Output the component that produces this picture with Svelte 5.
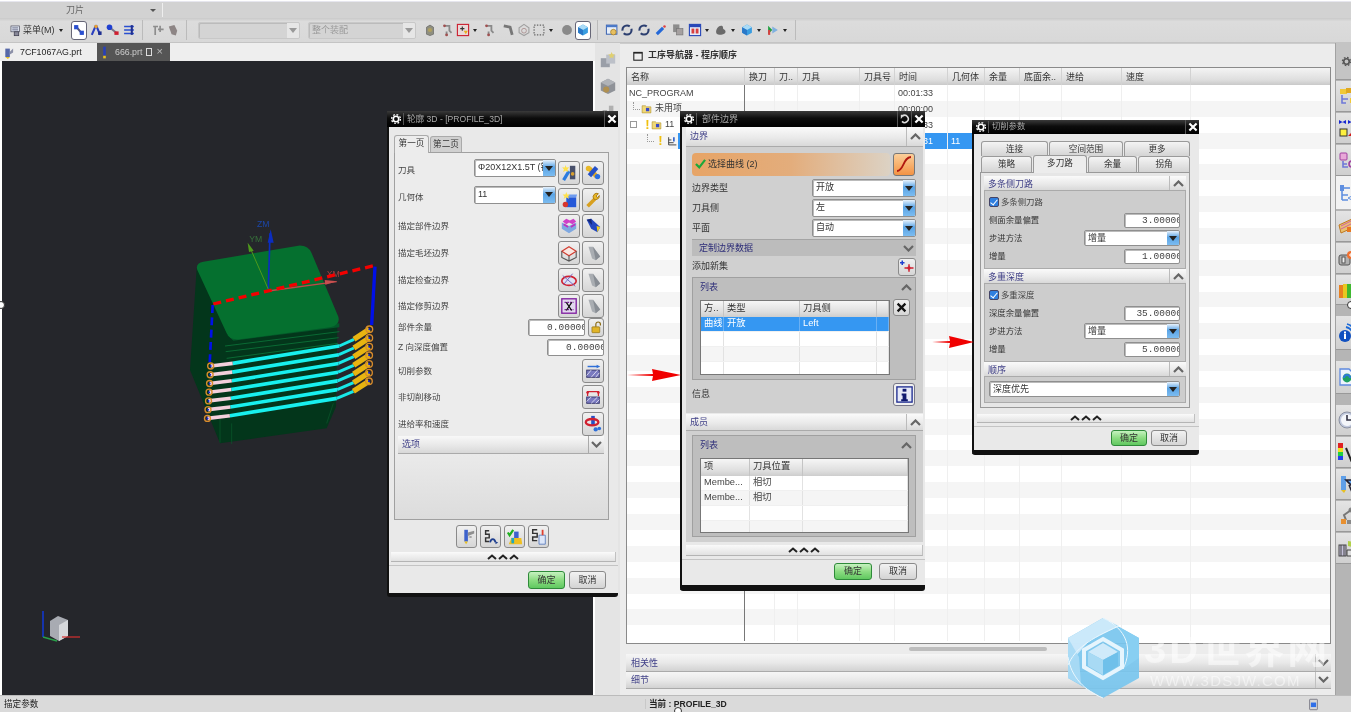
<script>
  const I = {
    menu: `<rect x="3" y="3" width="13" height="9" fill="#dfe6f2" stroke="#445"/><path d="M5 6h9M5 9h9" stroke="#335"/><rect x="8" y="12" width="7" height="6" fill="#889" stroke="#334"/>`,
    sel1: `<path d="M5 4l10 12" stroke="#557" stroke-width="3"/><rect x="3" y="3" width="6" height="6" fill="#2a4fd0"/><rect x="11" y="11" width="6" height="6" fill="#2a4fd0"/>`,
    sel2: `<path d="M10 3L4 17M10 3l6 14" stroke="#2a3fc0" stroke-width="3" fill="none"/><circle cx="10" cy="5" r="2.5" fill="#e8a030"/><rect x="13" y="12" width="5" height="5" fill="#203090"/>`,
    sel3: `<path d="M5 6l11 9" stroke="#778" stroke-width="3"/><circle cx="5" cy="6" r="4" fill="#2040d0"/><rect x="12" y="12" width="6" height="5" fill="#d02030"/>`,
    sel4: `<path d="M3 5h14M3 10h14M3 15h14" stroke="#2a4fd0" stroke-width="2.4"/><path d="M14 3v14" stroke="#203090" stroke-width="3"/>`,
    grayA: `<path d="M3 5h7M6 5v12M13 4v9M10 9h8" stroke="#8d8d8d" stroke-width="2.4"/>`,
    grayB: `<path d="M4 5l8-2 4 8-2 7-6-2z" fill="#8d8585"/>`,
    grayC: `<path d="M5 16V6l5-3 5 3v10l-5 2z" fill="#8f8f7f" stroke="#666"/><circle cx="10" cy="10" r="3" fill="#b0a060"/>`,
    redbox: `<rect x="2" y="2" width="16" height="16" fill="#e9d9d9" stroke="#cc2030" stroke-width="1.6"/><path d="M6 8h6M9 5v6" stroke="#333" stroke-width="1.6"/><path d="M11 11h6l-3 5z" fill="#e8b020"/>`,
    hook: `<path d="M5 4h7v7l3 3M8 12v5" stroke="#8a8a8a" stroke-width="2.6" fill="none"/><circle cx="5" cy="4" r="2" fill="#a05050"/><circle cx="8" cy="17" r="2" fill="#a05050"/>`,
    hook2: `<path d="M4 4l9 2 3 11" stroke="#777" stroke-width="4" fill="none"/>`,
    ball: `<circle cx="10" cy="10" r="7" fill="#8a8a8a"/>`,
    net: `<path d="M10 2l7 5v7l-7 4-7-4V7z" fill="none" stroke="#a0a0a0" stroke-width="1.6"/><circle cx="10" cy="11" r="3.4" fill="none" stroke="#a08080"/>`,
    dots: `<rect x="3" y="3" width="14" height="14" fill="none" stroke="#666" stroke-width="1.6" stroke-dasharray="2 2"/>`,
    cube: `<path d="M10 2l7 4v8l-7 4-7-4V6z" fill="#3a9de0"/><path d="M10 10l7-4-7-4-7 4z" fill="#a9dbf7"/><path d="M10 10v8l-7-4V6z" fill="#2a78c8"/>`,
    win: `<rect x="2" y="3" width="15" height="13" fill="#e6eef8" stroke="#3860b0" stroke-width="1.4"/><rect x="2" y="3" width="15" height="3" fill="#4a78c8"/><circle cx="12" cy="13" r="4" fill="#e8c060" stroke="#a07820"/>`,
    ring: `<circle cx="10" cy="10" r="6.5" fill="none" stroke="#2c3f70" stroke-width="3" stroke-dasharray="15 4"/>`,
    wand: `<path d="M4 16l9-9" stroke="#2468d8" stroke-width="4.5"/><circle cx="15" cy="5" r="1.8" fill="#e04040"/>`,
    stack: `<rect x="3" y="2" width="9" height="11" fill="#8d8d8d"/><rect x="8" y="8" width="9" height="9" fill="#a5a0a0" stroke="#777"/>`,
    cal: `<rect x="2" y="2" width="16" height="16" fill="#e8edf8" stroke="#2848b8" stroke-width="1.6"/><rect x="2" y="2" width="16" height="4" fill="#2848b8"/><rect x="5" y="8" width="4" height="7" fill="#d84040"/><rect x="11" y="8" width="4" height="7" fill="#d84040"/>`,
    blob: `<path d="M3 13c0-5 4-10 8-9 3 1 1 4 3 5 3 1 4 6-1 7-4 1-10 2-10-3z" fill="#6a6a6a"/>`,
    vid: `<path d="M3 4l6 6-6 6z" fill="#20a040"/><path d="M9 5l8 5-8 5z" fill="#7fb0e0"/><rect x="3" y="10" width="3" height="7" fill="#d84040"/>`,
    newtool: `<rect x="11" y="2" width="6" height="15" fill="#48506a"/><circle cx="14" cy="11" r="2" fill="#d8a030"/><path d="M4 18l6-10" stroke="#2b7ce0" stroke-width="3.6"/><path d="M6 1l1.2 3 3-.5-2 2.5 1.2 3-3-1.5-3 1.5 1-3-2-2.5 3 .5z" fill="#ffe14a"/>`,
    wrenchb: `<path d="M6 5l8 9" stroke="#e0a820" stroke-width="5"/><path d="M14 4l-8 9" stroke="#2450c8" stroke-width="5"/><circle cx="5" cy="5" r="3" fill="#e8b828"/><circle cx="15" cy="14" r="3" fill="#2b6fe0"/>`,
    newgeo: `<path d="M7 7h11v11H7z" fill="#2558d8"/><path d="M7 7l3-3h9l-1 3z" fill="#6f9cf0"/><circle cx="6" cy="15" r="3" fill="#d8342c"/><path d="M7 1l1 3 3 0-2 2 1 3-3-2-3 2 1-3-2-2 3 0z" fill="#ffe14a"/>`,
    wrench: `<path d="M4 17l8-8" stroke="#d8a020" stroke-width="4"/><path d="M11 9a4 4 0 0 1 5-6l-2.5 2.5 1.5 2L17 5a4 4 0 0 1-6 4z" fill="#e8b828" stroke="#a87810"/>`,
    part: `<path d="M10 18L2 13V6l8 4 8-4v7z" fill="#7fa8e0"/><path d="M3 5l4-3 4 2 4-2 3 3-4 3-4-2-3 2z" fill="#d040c8"/><path d="M4 8l5 3M12 11l5-3" stroke="#c030c0" stroke-width="2"/>`,
    flash: `<path d="M3 3l5-1 10 9-3 6-7-4z" fill="#2448c0"/><path d="M14 10l4 1-3 6z" fill="#f0d020"/><path d="M3 3l5-1 1 7z" fill="#142878"/>`,
    flashG: `<path d="M5 3h5l8 11-5 4-4-2z" fill="#a9adb2"/><path d="M10 3l8 11-5 4z" fill="#888d94"/>`,
    blank: `<path d="M10 3l8 5-8 5-8-5z" fill="#fae6e0" stroke="#d03c30" stroke-width="1.3"/><path d="M2 8v7l8 4 8-4V8M10 13v6" fill="none" stroke="#555" stroke-width="1.2"/>`,
    check: `<ellipse cx="10" cy="11" rx="8" ry="5" fill="#dbe2f4" stroke="#d02030" stroke-width="1.8"/><path d="M3 5l14 12M4 15L14 3" stroke="#7060c0"/>`,
    trim: `<rect x="2" y="2" width="16" height="16" fill="#e2d8ee" stroke="#8020a0" stroke-width="1.5"/><path d="M5 6h10M5 14h10" stroke="#8020a0" stroke-width="1.5" stroke-dasharray="2 1"/><path d="M7 6l6 9M13 6l-6 9" stroke="#111" stroke-width="1.4"/>`,
    lock: `<rect x="3" y="9" width="12" height="9" rx="1" fill="#e0b428" stroke="#8a6a10"/><path d="M9 9V5a3.4 3.4 0 0 1 7 0v2" fill="none" stroke="#8a6a10" stroke-width="1.8"/>`,
    cut: `<rect x="3" y="9" width="14" height="8" fill="#7a7ac0" stroke="#33336a"/><path d="M3 15l5-6M8 17l7-8M13 17l4-5" stroke="#e0e0f0"/><path d="M4 5h11" stroke="#2f6fd8" stroke-width="1.6"/><path d="M14 3l4 2-4 2z" fill="#2f6fd8"/>`,
    noncut: `<rect x="3" y="10" width="14" height="7" fill="#7a7ac0" stroke="#33336a"/><path d="M3 15l5-5M8 17l7-7M13 17l4-4" stroke="#e0e0f0"/><path d="M4 9V4h12v5" fill="none" stroke="#d02030" stroke-width="1.4"/><circle cx="4" cy="5" r="1.5" fill="#d02030"/><circle cx="16" cy="5" r="1.5" fill="#d02030"/>`,
    feed: `<path d="M10 1v11" stroke="#2450c8" stroke-width="4"/><ellipse cx="9" cy="8" rx="7" ry="3.6" fill="none" stroke="#d02030" stroke-width="2.6"/><circle cx="13" cy="16" r="2.4" fill="#2f6fd8"/><circle cx="17" cy="15" r="2" fill="#2f6fd8"/>`,
    gen: `<path d="M7 2h4v13H7z" fill="#3d62cc"/><path d="M7 15h4l-2 3z" fill="#e8c020"/><path d="M11 5l7-2v3l-7 3zM11 10l4-1v2z" fill="#8f8f8f"/>`,
    repl: `<path d="M8 3H4v4h4v4H4v4h4" fill="none" stroke="#333" stroke-width="1.6"/><path d="M9 16c1-5 5-5 6 0" fill="none" stroke="#1f3f8f" stroke-width="2"/><path d="M15 18l3-2-3-1z" fill="#1f3f8f"/>`,
    verify: `<path d="M2 5l2 3 4-6" fill="none" stroke="#20b020" stroke-width="2.4"/><rect x="9" y="4" width="5" height="12" fill="#3d62cc"/><path d="M3 18l3-7h11l1 7z" fill="#f0c020"/><rect x="6" y="11" width="3" height="6" fill="#20a8c0"/>`,
    list: `<path d="M8 2H3v4h5v4H3v4h5" fill="none" stroke="#333" stroke-width="1.6"/><path d="M10 8h7v10h-7z" fill="#dce6f8" stroke="#6080c0"/><path d="M13 2h2v6h-2z" fill="#e04030"/>`,
    add: `<path d="M3 2v6M0 5h6" stroke="#2040d0" stroke-width="2"/><path d="M6 12h12M12 7v10" stroke="#d02030" stroke-width="2"/><circle cx="12" cy="12" r="2.2" fill="#d02030"/>`,
    x: `<path d="M4 4l12 12M16 4L4 16" stroke="#111" stroke-width="3.4"/>`,
    info: `<rect x="2" y="2" width="16" height="16" fill="#e6eaf8" stroke="#1c2a90" stroke-width="1.4"/><rect x="8" y="4" width="4" height="3" fill="#101a70"/><path d="M7 9h5v6h1.5v2h-7v-2H8v-4H7z" fill="#101a70"/>`,
    curve: `<path d="M3 17c7 0 6-14 14-14" fill="none" stroke="#b01810" stroke-width="1.8"/>`,
    s1: `<rect x="3" y="3" width="7" height="5" fill="#f0c838"/><rect x="9" y="2" width="6" height="5" fill="#e0a820"/><path d="M5 9v8h4M5 13h6" stroke="#6f78d8" stroke-width="1.6" fill="none"/><rect x="13" y="12" width="6" height="5" fill="#f0c838"/>`,
    s2: `<path d="M2 2l7 4 0-4-7 4zM18 2l-7 4 0-4 7 4z" fill="#1626d0"/><rect x="3" y="11" width="7" height="7" fill="#fdf040" stroke="#333"/><path d="M11 18l7-7v7z" fill="#d01818"/>`,
    s3: `<rect x="3" y="3" width="7" height="7" rx="1" fill="#e8a8d8" stroke="#a040a0"/><path d="M6 11v6h5M6 14h4" stroke="#6f78d8" stroke-width="1.6" fill="none"/><circle cx="15" cy="14" r="3" fill="none" stroke="#a040a0" stroke-width="1.6"/>`,
    s4: `<rect x="3" y="2" width="4" height="6" fill="#5f8fe0"/><path d="M5 8v9M5 12h6M5 17h6" stroke="#5f8fe0" stroke-width="1.6"/><path d="M11 15l6 3v-6z" fill="none" stroke="#5f8fe0"/><path d="M7 5h6" stroke="#5f8fe0" stroke-width="1.6"/>`,
    s5: `<path d="M2 9l13-6v9L4 17z" fill="#e8c070" stroke="#c07820"/><path d="M4 10l10-5M4 13l10-5" stroke="#d060a0"/><rect x="10" y="11" width="8" height="5" fill="#e87820"/><circle cx="17" cy="15" r="2.6" fill="#2f78d8"/>`,
    s6: `<rect x="2" y="7" width="11" height="10" rx="2" fill="#b0b0b0" stroke="#555"/><rect x="5" y="9" width="3" height="6" fill="#eee" stroke="#555"/><circle cx="14" cy="7" r="4" fill="#f07030"/><path d="M12 7h4M14 5v4" stroke="#fff"/>`,
    s7: `<rect x="2" y="5" width="4" height="13" fill="#e88020"/><rect x="6" y="4" width="4" height="14" fill="#e8c820"/><rect x="10" y="4" width="4" height="14" fill="#40b830"/><rect x="14" y="4" width="4" height="14" fill="#2f78e8"/>`,
    s8: `<circle cx="8" cy="13" r="6" fill="#1050c0"/><rect x="7" y="11" width="2" height="5" fill="#fff"/><rect x="7" y="8.5" width="2" height="2" fill="#fff"/><path d="M9 4a9 9 0 0 1 7 8M10 1a12 12 0 0 1 9 11" fill="none" stroke="#1c6ad8" stroke-width="1.8"/>`,
    s9: `<path d="M3 2h9l5 5v11H3z" fill="#eef3fc" stroke="#5f8ae0" stroke-width="1.3"/><circle cx="10" cy="11" r="4.4" fill="#20a060"/><path d="M7 11a3 3 0 0 1 6 0" stroke="#2f78d8" stroke-width="2" fill="none"/>`,
    s10: `<circle cx="10" cy="10" r="8" fill="#c0c8dc" stroke="#8a90a0"/><circle cx="10" cy="10" r="6" fill="#f4f6fa"/><path d="M10 5v5h4" stroke="#334" stroke-width="1.6" fill="none"/>`,
    s11: `<rect x="1" y="1" width="5" height="5" fill="#e02020"/><rect x="1" y="6" width="5" height="4" fill="#f0e020"/><rect x="1" y="10" width="5" height="4" fill="#20d040"/><rect x="1" y="14" width="5" height="4" fill="#2040f0"/><path d="M9 6l5 12 4-10" fill="none" stroke="#222" stroke-width="2"/>`,
    s12: `<rect x="4" y="2" width="5" height="14" fill="#5f9fe8"/><path d="M4 16h5l-2 3z" fill="#e8c020"/><path d="M9 6h9l-4 5zM12 11l3 7" stroke="#223" stroke-width="1.6" fill="#5f9fe8"/>`,
    s13: `<circle cx="14" cy="4" r="2.5" fill="#888"/><path d="M14 4l-7 5 2 5" stroke="#777" stroke-width="2" fill="none"/><rect x="4" y="13" width="5" height="5" fill="#e89030"/><rect x="10" y="14" width="5" height="4" fill="#888"/>`,
    s14: `<rect x="2" y="7" width="7" height="11" fill="#c4c0d8" stroke="#444"/><path d="M4 7v11M7 7v11" stroke="#444"/><path d="M11 3l5 1-1 5-4-1z" fill="#b0d048"/><path d="M10 12h8v6h-8z" fill="#ddd" stroke="#444"/>`,
    gearS: `<circle cx="10" cy="10" r="5" fill="none" stroke="#555" stroke-width="3"/><circle cx="10" cy="10" r="7.5" fill="none" stroke="#555" stroke-width="2.2" stroke-dasharray="3 2.9"/>`,
    gear: `<circle cx="10" cy="10" r="4.6" fill="none" stroke="#fff" stroke-width="2.8"/><circle cx="10" cy="10" r="7.4" fill="none" stroke="#fff" stroke-width="2.2" stroke-dasharray="3 2.8"/>`,
    close: `<path d="M4 4l12 12M16 4L4 16" stroke="#fff" stroke-width="3.6"/>`,
    reset: `<path d="M5 14a6 6 0 1 0 1-9" fill="none" stroke="#ddd" stroke-width="2.6"/><path d="M9 2v7H3z" fill="#ddd" transform="rotate(180 6 6)"/>`,
    navbox: `<rect x="3" y="4" width="14" height="13" fill="#eee" stroke="#222" stroke-width="1.8"/><path d="M3 5h14" stroke="#222" stroke-width="2"/>`,
    pt1: `<path d="M2 4h7v13H2z" fill="#5668a8"/><path d="M9 9l5-5v6l-5 3z" fill="#8c90a8"/><path d="M2 17h7l-3 3z" fill="#e8c020"/>`,
    pt2: `<path d="M8 1h4v14H8z" fill="#2840b8"/><rect x="8" y="15" width="4" height="4" fill="#e8c020"/>`,
    fold: `<path d="M2 5h6l2 2h8v11H2z" fill="#f0d878" stroke="#a88a20"/><rect x="9" y="9" width="6" height="6" fill="#3848c8"/>`,
    op: `<path d="M3 4v14h14M3 14h9M3 9h5" stroke="#333" stroke-width="1.6" fill="none"/><path d="M11 4h3v8h-3z" fill="#3060c8"/>`,
    strip1: `<rect x="2" y="8" width="10" height="10" fill="#9a9fa8"/><rect x="8" y="4" width="10" height="10" fill="#bcc0c8"/><path d="M14 1l1.2 2.6 2.6.3-2 1.8.6 2.7-2.4-1.4-2.4 1.4.6-2.7-2-1.8 2.6-.3z" fill="#e0d070"/>`,
    strip2: `<path d="M10 2l8 4v9l-8 4-8-4V6z" fill="#8f9298"/><path d="M10 10l8-4-8-4-8 4z" fill="#b0b3b8"/><circle cx="8" cy="14" r="3.4" fill="#b09050"/>`,
    strip3: `<rect x="4" y="8" width="5" height="10" fill="#9a9a9a"/><rect x="11" y="3" width="5" height="15" fill="#b0b0b0"/>`,
    smallIcon: `<rect x="4" y="2" width="12" height="16" rx="1" fill="#d8d8d8" stroke="#556"/><rect x="6" y="7" width="8" height="7" fill="#2f6fe8"/>`
  };

  const tools = [
    ['sel1', 0, 1], ['sel2', 2], ['sel3', 3], ['sel4', 2], '|',
    ['grayA', 4], ['grayB', 1], '|'
  ];
  const tools2 = [
    ['grayC', 7], ['hook', 4], ['redbox', 1], '^', ['hook', 4], ['hook2', 4], ['net', 2], ['dots', 1], '^', ['ball', 5], ['cube', 1, 1], '|',
    ['win', 3], ['ring', 1], ['ring', 3], ['wand', 3], ['stack', 3], ['cal', 3], '^', ['blob', 3], '^', ['cube', 3], '^', ['vid', 3], '^', '|'
  ];

  const cols = ['名称', '换刀', '刀..', '刀具', '刀具号', '时间', '几何体', '余量', '底面余..', '进给', '速度', ''];
  const rows = Array.from({ length: 35 }, (_, i) => i);

  const side = [
    ['gearS', 37, 0, 'top'], ['s1', 31, 1], ['s2', 31, 1], ['s3', 31, 1], ['s4', 33, 0, 'act'],
    ['s5', 31, 2], ['s6', 31, 1], ['s7', 30, 1], ['s8', 34, 11], ['s9', 33, 11], ['s10', 31, 11],
    ['s11', 31, 1], ['s12', 31, 1], ['s13', 31, 1], ['s14', 31, 1]
  ];

  const blocks = [0, 1, 2, 3, 4, 5, 6].map((i) => {
    const a = [92 - i * 1.6, 468 + i * 26.2];
    const b = [158 - i * 1.4, 460 + i * 26.2];
    const c = [478 - i * 1.3, 408 + i * 26.2];
    const d = [522 - i * 0.3, 388 + i * 26];
    const e = [568 - i * 0.2, 358 + i * 26];
    return { a, b, c, d, e };
  });
  const l1 = [['刀具', 'newtool', 'wrenchb'], ['几何体', 'newgeo', 'wrench'], ['描定部件边界', 'part', 'flash'], ['描定毛坯边界', 'blank', 'flashG'], ['描定检查边界', 'check', 'flashG'], ['描定修剪边界', 'trim', 'flashG']];
</script>

{#snippet ic(k, s = 14)}
  <svg class="ic" width={s} height={s} viewBox="0 0 20 20" aria-hidden="true">{@html I[k]}</svg>
{/snippet}
{#snippet combo(t, cls = '')}
  <div class="combo {cls}"><span class="ctext">{t}</span><span class="carrow"></span></div>
{/snippet}
{#snippet chev(down = false)}
  <svg class="chev" class:down width="11" height="7" viewBox="0 0 11 7" aria-hidden="true"><path d="M1 6l4.5-4.5L10 6" fill="none" stroke="#666" stroke-width="2.2"/></svg>
{/snippet}
{#snippet expand(cls)}
  <div class="expand {cls}">
    {#each [0, 1, 2] as n (n)}
      <svg width="10" height="6" viewBox="0 0 10 6" aria-hidden="true"><path d="M1 5l4-3.5L9 5" fill="none" stroke="#222" stroke-width="2"/></svg>
    {/each}
  </div>
{/snippet}
{#snippet title(t, reset = false)}
  <div class="title">
    <span class="tgear">{@render ic('gear', 12)}</span>
    <span class="ttext">{t}</span>
    {#if reset}<span class="tbtn">{@render ic('reset', 12)}</span>{/if}
    <span class="tbtn">{@render ic('close', 12)}</span>
  </div>
{/snippet}
{#snippet actions(cls)}
  <div class="actions {cls}"><button class="ok">确定</button><button class="cancel">取消</button></div>
{/snippet}
{#snippet toolitems(list)}
  {#each list as t, i (i)}
    {#if t === '|'}<span class="tsep"></span>
    {:else if t === '^'}<span class="tcaret"></span>
    {:else}<span class="ti" class:on={t[2]} style="margin-left:{t[1]}px">{@render ic(t[0], 14)}</span>{/if}
  {/each}
{/snippet}

<div class="app">
  <div class="ruler"></div>
  <div class="menu">
    <span class="mname">刀片</span><span class="mcaret"></span><span class="msep"></span>
  </div>
  <div class="toolbar">
    <span class="ti first">{@render ic('menu', 13)}</span><span class="mlabel">菜单(M)</span><span class="tcaret"></span>
    <span class="gap8"></span>
    {@render toolitems(tools)}
    <div class="combo gray c1"><span class="ctext"></span><span class="carrow g"></span></div>
    <div class="combo gray c2"><span class="ctext">整个装配</span><span class="carrow g"></span></div>
    {@render toolitems(tools2)}
  </div>

  <div class="work">
    <div class="leftpane">
      <div class="tabs">
        <div class="dtab">{@render ic('pt1', 13)}<span>7CF1067AG.prt</span></div>
        <div class="dtab cur">{@render ic('pt2', 13)}<span>666.prt</span><i class="dico"></i><b>×</b></div>
      </div>
      <div class="viewport">
        <svg class="scene" viewBox="0 0 630 720" aria-hidden="true">
          <path d="M50 175L30 480 120 700 440 655 468 590 472 350 160 385Z" fill="#03361b"/>
          <path d="M120 610V698M155 640V702M440 640l20-60" stroke="#0a5a2c" stroke-width="2" fill="none"/>
          <path d="M135 408L478 365M137 425L476 383M140 445L474 400" stroke="#0a6a34" stroke-width="3" fill="none"/>
          <path d="M142 375L478 340V352L160 392Z" fill="#04582a"/>
          <path d="M70 155L355 107Q385 105 395 130L475 320Q482 345 450 352L180 388Q150 392 140 370L52 180Q45 160 70 155Z" fill="#05702f"/>
          <path d="M265 236L270 70" stroke="#0b2dc0" stroke-width="5"/>
          <path d="M272 58l9 40h-18z" fill="#0b2dc0"/>
          <path d="M265 238L208 108" stroke="#4f9a1c" stroke-width="3"/>
          <path d="M203 98l18 24-14 4z" fill="#4f9a1c"/>
          <path d="M265 243L470 215" stroke="#c04848" stroke-width="4"/>
          <path d="M472 214l-38-4 2 14z" fill="#c85050"/>
          <text x="231" y="52" class="ax zm">ZM</text>
          <text x="208" y="95" class="ax ym">YM</text>
          <text x="440" y="200" class="ax xm">XM</text>
          <path d="M100 282L590 165" stroke="#f40000" stroke-width="10" stroke-dasharray="24 15"/>
          <path d="M585 170L575 345" stroke="#0010e8" stroke-width="10"/>
          <path d="M98 285L89 462" stroke="#0010e8" stroke-width="8" stroke-dasharray="24 13"/>
          {#each blocks as p, i (i)}
            <path d="M{p.c[0]} {p.c[1]}L{p.d[0]} {p.d[1]}" stroke="#18e8e8" stroke-width="9" fill="none"/>
            <path d="M{p.b[0]} {p.b[1]}L{p.c[0]} {p.c[1]}" stroke="#18f0ee" stroke-width="11" fill="none"/>
            <path d="M{p.a[0]} {p.a[1]}L{p.b[0]} {p.b[1]}" stroke="#f3d0dc" stroke-width="11" fill="none"/>
            <path d="M{p.d[0]} {p.d[1]}L{p.e[0]} {p.e[1]}" stroke="#e8b410" stroke-width="16" fill="none"/>
            <circle cx={p.a[0]} cy={p.a[1]} r="9" fill="none" stroke="#d88c2c" stroke-width="4"/>
            <circle cx={p.e[0]} cy={p.e[1]} r="10" fill="none" stroke="#d88c2c" stroke-width="4"/>
            <circle cx={p.a[0]} cy={p.a[1]} r="3" fill="#1020e0"/>
            <circle cx={p.e[0]} cy={p.e[1]} r="3" fill="#1020e0"/>
          {/each}
        </svg>
        <svg class="triad" viewBox="0 0 50 40" aria-hidden="true">
          <path d="M12 14l8-5 10 4v16l-9 5-9-5z" fill="#a8abb2"/>
          <path d="M21 18l9-5v16l-9 5z" fill="#d6d8dc"/>
          <path d="M5 30V4" stroke="#1038d8" stroke-width="1.5"/>
          <path d="M5 30l14 4" stroke="#28a048" stroke-width="1.5"/>
          <path d="M24 30h18" stroke="#d83030" stroke-width="1.2"/>
        </svg>
      </div>
    </div>
    <div class="strip">
      <span>{@render ic('strip1', 18)}</span>
      <span>{@render ic('strip2', 18)}</span>
      <span>{@render ic('strip3', 18)}</span>
    </div>
    <div class="nav">
      <div class="navhead">{@render ic('navbox', 12)}<span>工序导航器 - 程序顺序</span></div>
      <div class="table">
        <div class="thead tcols">
          {#each cols as c, i (i)}<div class="th">{c}</div>{/each}
        </div>
        <div class="tbody">
          {#each rows as r (r)}
            <div class="tr tcols" class:alt={r % 2 === 1}>
              <div class="td name">
                {#if r === 0}NC_PROGRAM
                {:else if r === 1}<span class="tree l1"></span>{@render ic('fold', 11)}<span class="nm">未用项</span>
                {:else if r === 2}<span class="minus"></span><span class="bang">!</span>{@render ic('fold', 11)}<span class="nm">11</span>
                {:else if r === 3}<span class="tree l2"></span><span class="bang b2">!</span><span class="opi">{@render ic('op', 11)}</span><span class="selrest"></span>
                {/if}
              </div>
              {#each cols.slice(1) as _, j (j)}
                <div class="td" class:sel={r === 3 && j < 6}>
                  {#if j === 4}{r === 0 ? '00:01:33' : r === 1 ? '00:00:00' : r === 2 ? '00:01:33' : r === 3 ? '00:01:31' : ''}{/if}
                  {#if j === 5 && r === 3}11{/if}
                </div>
              {/each}
            </div>
          {/each}
        </div>
      </div>
      <div class="grip"><span></span></div>
      <div class="npanel"><span>相关性</span><i>{@render chev(true)}</i></div>
      <div class="npanel"><span>细节</span><i>{@render chev(true)}</i></div>
    </div>
    <div class="sidebar">
      {#each side as s (s[0])}
        <div class="scell {s[3] || ''}" style="height:{s[1]}px;margin-top:{s[2]}px">{@render ic(s[0], s[0] === 'gearS' ? 11 : 20)}</div>
      {/each}
    </div>
  </div>
  <div class="status">
    <span class="sl">描定参数</span>
    <span class="sc">当前 : PROFILE_3D</span>
    <span class="sr">{@render ic('smallIcon', 13)}</span>
  </div>

  <!-- window 1 -->
  <div class="dlg d1">
    {@render title('轮廓 3D - [PROFILE_3D]')}
    <div class="d1tabs"><span class="dt on">第一页</span><span class="dt">第二页</span></div>
    <div class="d1panel">
      {#each l1 as r, i (i)}
        <div class="d1row" class:top={i < 2}>
          <span class="lab">{r[0]}</span>
          {#if i === 0}{@render combo('Φ20X12X1.5T (铣', 'cw')}{/if}
          {#if i === 1}{@render combo('11', 'cw')}{/if}
          <span class="ib">{@render ic(r[1], 18)}</span><span class="ib">{@render ic(r[2], 18)}</span>
        </div>
      {/each}
      <div class="d1row s first"><span class="lab">部件余量</span><span class="num w57">0.00000</span><span class="ib lk">{@render ic('lock', 13)}</span></div>
      <div class="d1row s"><span class="lab">Z 向深度偏置</span><span class="num w57">0.00000</span></div>
      <div class="d1row"><span class="lab">切削参数</span><span class="ib">{@render ic('cut', 18)}</span></div>
      <div class="d1row"><span class="lab">非切削移动</span><span class="ib">{@render ic('noncut', 18)}</span></div>
      <div class="d1row"><span class="lab">进给率和速度</span><span class="ib">{@render ic('feed', 18)}</span></div>
      <div class="optbar"><span>选项</span><i>{@render chev(true)}</i></div>
    </div>
    <div class="d1icons">
      {#each ['gen', 'repl', 'verify', 'list'] as k (k)}<span class="ib">{@render ic(k, 18)}</span>{/each}
    </div>
    {@render expand('e1')}
    <div class="dsep"></div>
    {@render actions('a1')}
  </div>

  <!-- window 2 -->
  <div class="dlg d2">
    {@render title('部件边界', true)}
    <div class="sec s20"><span>边界</span><i>{@render chev()}</i></div>
    <div class="graybody g1">
      <div class="pick">
        <div class="pickbar"><svg width="11" height="10" viewBox="0 0 13 12" aria-hidden="true"><path d="M1 6l4 4 7-9" fill="none" stroke="#1aa83a" stroke-width="2.6"/></svg><span>选择曲线 (2)</span></div>
        <span class="ib or">{@render ic('curve', 20)}</span>
      </div>
      <div class="fr"><span class="lab">边界类型</span>{@render combo('开放', 'w104')}</div>
      <div class="fr"><span class="lab">刀具侧</span>{@render combo('左', 'w104')}</div>
      <div class="fr"><span class="lab">平面</span>{@render combo('自动', 'w104')}</div>
      <div class="subbar"><span>定制边界数据</span>{@render chev(true)}</div>
      <div class="fr add"><span class="lab">添加新集</span><span class="ib sm">{@render ic('add', 15)}</span></div>
      <div class="grp gl">
        <div class="gh"><span>列表</span>{@render chev()}</div>
        <div class="gb">
          <div class="mt mt1">
            <div class="mh lc"><span>方..</span><span>类型</span><span>刀具侧</span><span></span></div>
            <div class="mr lc selr"><span>曲线</span><span>开放</span><span>Left</span><span></span></div>
            <div class="mr lc"><span></span><span></span><span></span><span></span></div>
            <div class="mr lc alt"><span></span><span></span><span></span><span></span></div>
            <div class="mr lc"><span></span><span></span><span></span><span></span></div>
          </div>
          <span class="ib xb">{@render ic('x', 13)}</span>
        </div>
      </div>
      <div class="fr info"><span class="lab">信息</span><span class="ib inf">{@render ic('info', 19)}</span></div>
    </div>
    <div class="sec s17"><span>成员</span><i>{@render chev()}</i></div>
    <div class="graybody g2">
      <div class="grp gm">
        <div class="gh"><span>列表</span>{@render chev()}</div>
        <div class="mt mt2">
          <div class="mh mc"><span>项</span><span>刀具位置</span><span></span></div>
          <div class="mr mc"><span>Membe...</span><span>相切</span><span></span></div>
          <div class="mr mc alt"><span>Membe...</span><span>相切</span><span></span></div>
          <div class="mr mc"><span></span><span></span><span></span></div>
          <div class="mr mc alt"><span></span><span></span><span></span></div>
        </div>
      </div>
    </div>
    {@render expand('e2')}
    <div class="dsep"></div>
    {@render actions('a2')}
  </div>

  <!-- window 3 -->
  <div class="dlg d3">
    {@render title('切削参数')}
    <div class="t3 r1"><span>连接</span><span>空间范围</span><span>更多</span></div>
    <div class="t3 r2"><span>策略</span><span class="on">多刀路</span><span>余量</span><span>拐角</span></div>
    <div class="d3panel">
      <div class="sec s15"><span>多条侧刀路</span><i>{@render chev()}</i></div>
      <div class="gb3">
        <div class="r3"><span class="cb"></span><span>多条侧刀路</span></div>
        <div class="r3"><span class="lab">侧面余量偏置</span><span class="num w56">3.00000</span></div>
        <div class="r3"><span class="lab">步进方法</span>{@render combo('增量', 'w96')}</div>
        <div class="r3"><span class="lab">增量</span><span class="num w56">1.00000</span></div>
      </div>
      <div class="sec s15"><span>多重深度</span><i>{@render chev()}</i></div>
      <div class="gb3">
        <div class="r3"><span class="cb"></span><span>多重深度</span></div>
        <div class="r3"><span class="lab">深度余量偏置</span><span class="num w56">35.00000</span></div>
        <div class="r3"><span class="lab">步进方法</span>{@render combo('增量', 'w96')}</div>
        <div class="r3"><span class="lab">增量</span><span class="num w56">5.00000</span></div>
      </div>
      <div class="sec s15"><span>顺序</span><i>{@render chev()}</i></div>
      <div class="gb3 last">{@render combo('深度优先', 'w191')}</div>
    </div>
    {@render expand('e3')}
    <div class="dsep s3"></div>
    {@render actions('a3')}
  </div>

  <svg class="arrow a-1" viewBox="0 0 54 16" aria-hidden="true"><path d="M0 8L26 7 25 2 54 8 25 14 26 9Z" fill="#f00000"/></svg>
  <svg class="arrow a-2" viewBox="0 0 42 16" aria-hidden="true"><path d="M0 8L18 7 17 2 42 8 17 14 18 9Z" fill="#f00000"/></svg>

  <div class="mark">
    <svg width="73" height="82" viewBox="0 0 73 82" aria-hidden="true">
      <path d="M36 1L72 21V61L36 81 1 61V21Z" fill="#78c6ee" opacity=".92"/>
      <path d="M36 1L1 21V48L22 24 52 9Z" fill="#cfeafa" opacity=".95"/>
      <path d="M1 21V61L14 68 12 40Z" fill="#a8daf4" opacity=".95"/>
      <path d="M36 1C60 12 66 30 56 52L72 41V21Z" fill="#88cff2"/>
      <path d="M1 48C8 32 22 22 52 9M36 1C60 12 66 32 56 52M1 40C4 60 18 74 36 81" fill="none" stroke="#eaf7fe" stroke-width="1"/>
      <path d="M36 22L55 33V50L36 61 17 50V33Z" fill="none" stroke="#e6f5fd" stroke-width="4"/>
      <path d="M36 26L51 35 36 43 21 35Z" fill="#cfeafa"/>
      <path d="M21 35L36 43V58L21 49Z" fill="#a8daf4"/>
      <path d="M51 35L36 43V58L51 49Z" fill="#6fc0ea"/>
    </svg>
  </div>
  <div class="wm1">3D世界网</div>
  <div class="wm2">WWW.3DSJW.COM</div>
  <span class="handle h1"></span><span class="handle h2"></span><span class="handle h3"></span>
</div>

<style>
  :global(body) { margin: 0; background: #fff; }
  * { box-sizing: border-box; }
  .app {
    position: relative; width: 1351px; height: 712px; overflow: hidden;
    display: flex; flex-direction: column; background: #e4e4e4;
    font: 9px/1.2 "Liberation Sans", "Noto Sans CJK SC", sans-serif; color: #333;
    filter: blur(.45px);
  }
  .ic { display: block; flex: none; }
  .ruler { height: 2px; background: #fff; border-bottom: 1px solid #e6e6ee; }
  .menu { height: 16px; background: #d2d2d2; display: flex; align-items: center; padding-left: 66px; color: #666; }
  .mname { width: 84px; }
  .mcaret { border: 3px solid transparent; border-top: 3px solid #555; margin-top: 3px; }
  .msep { width: 1px; height: 14px; background: #eee; margin-left: 6px; }
  .toolbar {
    height: 25px; display: flex; align-items: center; padding-left: 8px;
    background: linear-gradient(#c9c9c9, #dcdcdc 14%, #d8d8d8); border-bottom: 1px solid #c4c4c4;
  }
  .ti { display: flex; align-items: center; justify-content: center; width: 14px; height: 18px; flex: none; }
  .ti.on { background: #fff; border: 1px solid #667; border-radius: 3px; width: 16px; height: 19px; }
  .mlabel { margin-left: 1px; width: 33px; color: #333; white-space: nowrap; }
  .tcaret { border: 2.5px solid transparent; border-top: 3.5px solid #222; margin: 3px 2px 0 3px; flex: none; }
  .gap8 { width: 6px; }
  .tsep { width: 1px; height: 20px; background: #f2f2f2; border-left: 1px solid #bbb; margin: 0 4px 0 6px; flex: none; }
  .combo.gray { height: 17px; background: #d4d4d4; border: 1px solid #c8c8c8; flex: none; }
  .combo.gray .ctext { color: #999; }
  .combo.c1 { width: 102px; margin-left: 7px; }
  .combo.c2 { width: 108px; margin-left: 8px; }
  .carrow.g { background: #e6e6e6; }
  .carrow.g::after { border-top-color: #999; }

  .work { flex: 1; min-height: 0; display: flex; }
  .leftpane { width: 595px; display: flex; flex-direction: column; padding-left: 2px; background: #fff; }
  .tabs { height: 18px; background: #eeeeee; display: flex; align-items: stretch; margin-left: -2px; }
  .dtab { display: flex; align-items: center; gap: 3px; padding: 0 4px 0 4px; width: 97px; color: #222; font-size: 8.8px; white-space: nowrap; }
  .dtab.cur { width: 73px; background: #555; color: #ccc; gap: 4px; padding-left: 1px; }
  .dico { width: 6px; height: 8px; border: 1.5px solid #ddd; flex: none; }
  .dtab b { font-size: 11px; color: #bbb; font-weight: 400; }
  .viewport { flex: 1; background: #25262b; position: relative; margin-right: 2px; }
  .scene { position: absolute; left: 178px; top: 149px; width: 210px; height: 240px; }
  .ax { font: 26px "Liberation Sans", sans-serif; }
  .zm { fill: #1c46a8; } .ym { fill: #36703a; } .xm { fill: #a04040; }
  .triad { position: absolute; left: 36px; top: 546px; width: 50px; height: 40px; }
  .strip { width: 25px; background: #e4e4e4; display: flex; flex-direction: column; align-items: center; gap: 8px; padding-top: 8px; }
  .nav { width: 715px; display: flex; flex-direction: column; background: #ececec; padding: 0 4px 0 6px; border-top: 1px solid #ccc; }
  .navhead { height: 23px; display: flex; align-items: center; gap: 4px; padding-left: 6px; font-weight: 700; color: #333; }
  .table { height: 577px; background: #fff; border: 1px solid #8a8a8a; overflow: hidden; display: flex; flex-direction: column; }
  .tcols { display: grid; grid-template-columns: 118px 30px 23px 62px 35px 53px 37px 35px 42px 60px 69px 1fr; }
  .thead { height: 17px; flex: none; background: linear-gradient(#f4f4f4, #dedede 70%, #c9c9c9); }
  .th { padding: 4px 0 0 4px; border-right: 1px solid #d2d2d2; color: #333; white-space: nowrap; overflow: hidden; }
  .th:last-child { border-right: 0; }
  .tbody { flex: 1; overflow: hidden; }
  .tr { height: 15.9px; background: #fff; }
  .tr.alt { background: #f5f5f5; }
  .td { border-right: 1px solid #efefef; padding: 3px 0 0 3px; white-space: nowrap; overflow: hidden; color: #444; }
  .td:last-child { border-right: 0; }
  .td.name { border-right: 1px solid #777; display: flex; align-items: center; padding: 0 0 0 2px; position: relative; }
  .td.sel { background: #3597f2; color: #fff; }
  .nm { margin-left: 3px; }
  .tree { display: block; border-left: 1px dotted #999; border-bottom: 1px dotted #999; height: 8px; margin-top: -6px; flex: none; }
  .tree.l1 { width: 7px; margin-left: 4px; margin-right: 1px; }
  .tree.l2 { width: 7px; margin-left: 18px; }
  .minus { width: 7px; height: 7px; border: 1px solid #999; margin: 0 7px 0 1px; flex: none; }
  .bang { color: #f0c010; font-weight: 700; font-size: 13px; width: 7px; text-align: center; line-height: 14px; flex: none; }
  .bang.b2 { margin-left: 3px; }
  .opi { margin-left: 3px; }
  .selrest { flex: 1; height: 100%; background: #3597f2; }
  .grip { height: 10px; display: flex; align-items: center; padding-left: 283px; }
  .grip span { width: 138px; height: 4px; background: #bdbdbd; border-radius: 2px; }
  .npanel {
    height: 17.5px; display: flex; align-items: center; justify-content: space-between; padding: 0 0 0 5px;
    background: linear-gradient(#f6f6f6, #e9e9e9 50%, #d2d2d2); color: #3e3e86; border-bottom: 1px solid #aaa;
  }
  .npanel span { padding-top: 2px; }
  .npanel i { width: 16px; height: 100%; border-left: 1px solid #c0c0c0; display: flex; align-items: center; justify-content: center; }
  .sidebar { width: 16px; background: #b5b5b5; border-left: 1px solid #a2a2a2; display: flex; flex-direction: column; overflow: hidden; }
  .scell { background: linear-gradient(#e4e4e4, #cfcfcf); border-bottom: 1px solid #999; display: flex; align-items: center; padding-left: 1px; flex: none; width: 30px; }
  .scell.top { background: #c4c4c4; padding-left: 5px; }
  .scell.act { background: #f2f2f2; border: 0; }
  .status { height: 17px; background: #dadada; border-top: 1px solid #bbb; display: flex; align-items: center; position: relative; }
  .sl { width: 646px; padding-left: 4px; color: #222; border-right: 1px solid #c8c8c8; font-size: 8.6px; }
  .sc { padding-left: 3px; font-weight: 700; color: #222; flex: 1; font-size: 8.6px; }
  .sr { margin-right: 31px; }

  .dlg {
    position: absolute; display: flex; flex-direction: column; background: #e9e9e9;
    border-left: 2px solid #111; border-bottom: 4px solid #111; border-radius: 0 0 3px 3px;
  }
  .title { height: 16px; flex: none; background: linear-gradient(#3a3a3a, #0c0c0c 45%, #000); display: flex; align-items: center; color: #a8a8a8; padding-left: 2px; margin-left: -2px; }
  .tgear { width: 15px; display: flex; justify-content: center; border-right: 1px solid #555; margin-right: 3px; }
  .ttext { flex: 1; white-space: nowrap; font-size: 8.6px; }
  .d2 .ttext { font-size: 9px; padding-left: 2px; }
  .tbtn { width: 14px; height: 16px; display: flex; align-items: center; justify-content: center; border-left: 1px solid #555; }
  .combo { display: flex; height: 18px; border: 1px solid #8f8f8f; border-radius: 2px; background: #fff; overflow: hidden; box-shadow: inset 1px 1px 0 #bbb; flex: none; }
  .ctext { flex: 1; padding: 2px 0 0 3px; white-space: nowrap; overflow: hidden; color: #333; font-size: 9px; }
  .carrow { width: 12px; flex: none; background: linear-gradient(#e8f2fc, #5aa4e6 45%, #7cbcf0); display: flex; justify-content: center; align-items: center; }
  .carrow::after { content: ""; border: 4px solid transparent; border-top: 5px solid #222; border-bottom: 0; }
  .ib {
    display: flex; align-items: center; justify-content: center; flex: none;
    width: 22px; height: 24px; margin-left: 2px; border: 1px solid #8a8a8a; border-radius: 3px;
    background: linear-gradient(#f0f0f0, #d6d6d6);
  }
  .num {
    display: block; flex: none; height: 17px; background: #fff; border: 1px solid #8f8f8f; border-radius: 2px; box-shadow: inset 1px 1px 0 #bbb;
    font: 9.5px/15px "Liberation Mono", "DejaVu Sans Mono", monospace; color: #444; text-align: right; overflow: hidden; white-space: nowrap; direction: rtl; text-indent: -3px;
  }
  .lab { flex: 1; white-space: nowrap; color: #444; font-size: 8.5px; }
  .dsep { height: 1px; background: #c4c4c4; flex: none; }
  .actions { display: flex; justify-content: flex-end; flex: none; }
  .actions button { font: inherit; padding: 0; color: #333; border-radius: 3px; border: 1px solid #8a8a8a; height: 18px; width: 38px; background: linear-gradient(#f2f2f2, #d4d4d4); }
  .actions .ok { border-color: #2f8a3a; background: linear-gradient(#c6f2c0, #8cdc82 50%, #60c860); margin-right: 4px; }
  .expand { height: 10px; flex: none; display: flex; justify-content: center; align-items: center; gap: 1px; background: linear-gradient(#fafafa, #e2e2e2); border-bottom: 1px solid #b4b4b4; border-right: 1px solid #c0c0c0; }

  .d1 { left: 387px; top: 111px; width: 231px; height: 486px; }
  .d1tabs { display: flex; align-items: flex-end; height: 25px; padding-left: 5px; flex: none; }
  .dt { width: 32px; height: 16px; margin-left: 1px; border: 1px solid #aaa; border-bottom: 0; border-radius: 3px 3px 0 0; background: #d0d0d0; text-align: center; padding-top: 2px; font-size: 8.6px; white-space: nowrap; }
  .dt.on { width: 35px; height: 18px; background: #ececec; margin-left: 0; margin-bottom: -1px; position: relative; }
  .d1panel { margin: 0 9px 0 5px; height: 368px; flex: none; border: 1px solid #a0a0a0; background: linear-gradient(#ececec 80%, #dcdcdc); padding: 7px 4px 0 3px; }
  .d1row { height: 26.6px; display: flex; align-items: center; }
  .d1row.s { height: 20px; }
  .d1row.first { margin-top: -2px; }
  .d1row.top .lab { margin-top: -6px; }
  .cw { width: 82px; align-self: flex-start; margin-top: -1px; }
  .w57 { width: 57px; }
  .lk { width: 16px; height: 19px; margin-left: 3px; }
  .optbar { height: 18px; margin-top: -1px; display: flex; justify-content: space-between; background: linear-gradient(#f8f8f8, #e8e8e8 55%, #d8d8d8); border-bottom: 1px solid #aaa; align-items: center; color: #3e3e86; padding-left: 4px; position: relative; }
  .optbar i { width: 16px; height: 18px; border-left: 1px solid #aaa; display: flex; align-items: center; justify-content: center; }
  .d1icons { height: 32px; padding-top: 5px; display: flex; justify-content: flex-start; padding-left: 67px; flex: none; }
  .d1icons .ib { height: 23px; margin: 0 3px 0 0; width: 21px; }
  .e1 { margin: 0 2px 3px 2px; }
  .a1 { padding: 5px 12px 0 0; }
  .a1 button { width: 37px; }

  .d2 { left: 680px; top: 111px; width: 245px; height: 480px; border-bottom-width: 6px; }
  .sec { flex: none; display: flex; align-items: center; justify-content: space-between; padding-left: 4px; margin: 0 2px 0 4px; background: linear-gradient(#fafafa, #eaeaea 55%, #d9d9d9); color: #3e3e86; border-bottom: 1px solid #aaa; }
  .sec i { width: 17px; height: 100%; border-left: 1px solid #bbb; display: flex; align-items: center; justify-content: center; }
  .s20 { height: 20px; } .s17 { height: 17px; margin-top: 1px; } .s15 { height: 15px; margin: 0; }
  .s15 span { padding-top: 2px; }
  .graybody { flex: none; margin: 0 2px 0 4px; background: #d0d0d0; padding: 0 7px 0 6px; }
  .g1 { height: 266px; padding-top: 5px; }
  .g2 { height: 111px; padding-top: 4px; margin-bottom: 3px; }
  .pick { height: 24px; display: flex; justify-content: space-between; align-items: center; }
  .pickbar { width: 198px; height: 23px; border-radius: 4px; display: flex; align-items: center; gap: 2px; padding-left: 3px; background: linear-gradient(90deg, #e7a466, #e3ad7c 50%, #dcd2c4); color: #333; font-size: 9px; }
  .ib.or { width: 22px; height: 23px; border-color: #777; background: linear-gradient(#fbcf9a, #f39344); margin-right: 1px; }
  .fr { height: 20px; display: flex; align-items: center; justify-content: space-between; }
  .fr .lab { font-size: 9px; color: #333; }
  .pick + .fr { margin-top: 2px; }
  .w104 { width: 104px; height: 18px; }
  .subbar { height: 17px; margin-top: 1px; display: flex; align-items: center; justify-content: space-between; padding: 0 2px 0 7px; background: #bcbcbc; color: #2c2c78; border-top: 1px solid #a4a4a4; }
  .add { height: 21px; }
  .ib.sm { width: 18px; height: 18px; margin: 0; }
  .grp { background: #bebebe; border: 1px solid #a0a0a0; }
  .gh { height: 18px; display: flex; align-items: center; justify-content: space-between; padding: 0 3px 0 7px; color: #2c2c78; }
  .gl { height: 103px; }
  .gb { display: flex; padding: 4px 0 0 7px; align-items: flex-start; }
  .mt { background: #fff; border: 1px solid #777; flex: none; overflow: hidden; font-size: 9.3px; }
  .mt1 { width: 190px; height: 75px; }
  .xb { width: 17px; height: 17px; margin-left: 3px; margin-top: -1px; }
  .mh, .mr { display: grid; color: #444; }
  .mh { height: 16px; background: linear-gradient(#f6f6f6, #dedede 70%, #cdcdcd); }
  .mr { height: 15px; background: #fff; border-bottom: 1px solid #f0f0f0; }
  .mr.alt { background: #f5f5f5; }
  .mh span, .mr span { padding: 1px 0 0 3px; border-right: 1px solid #e2e2e2; white-space: nowrap; overflow: hidden; }
  .mh span { border-right-color: #c4c4c4; color: #333; padding-top: 2px; }
  .lc { grid-template-columns: 23px 76px 77px 1fr; }
  .selr { background: #3597f2; color: #fff; }
  .selr span { border-right-color: #6ab0f4; }
  .fr.info { height: 23px; margin-top: 3px; }
  .ib.inf { width: 22px; height: 23px; margin: 0 1px 0 0; background: #f0f0f0; border-color: #778; }
  .gm { height: 102px; }
  .mt2 { margin: 4px 0 0 7px; width: 209px; height: 75px; }
  .mc { grid-template-columns: 49px 53px 1fr; }
  .mt2 .mh { height: 17px; }
  .e2 { margin: 0 2px 3px 4px; height: 11px; }
  .a2 { padding: 3px 8px 0 0; }
  .a2 button { height: 17px; }
  .a2 .ok { margin-right: 7px; }

  .d3 { left: 972px; top: 120px; width: 227px; height: 335px; border-bottom-width: 5px; }
  .d3 .title { height: 14px; }
  .d3 .ttext { font-size: 8.3px; }
  .d3 .tbtn { height: 14px; }
  .t3 { display: flex; flex: none; margin-left: 7px; width: 209px; gap: 1px; }
  .t3 span { border: 1px solid #9a9a9a; border-bottom: 0; border-radius: 3px 3px 0 0; background: linear-gradient(#f4f4f4, #d4d4d4); text-align: center; color: #333; padding-top: 2px; white-space: nowrap; font-size: 8.6px; }
  .r1 { margin-top: 7px; height: 15px; }
  .r1 span:nth-child(1) { width: 67px; } .r1 span:nth-child(2) { width: 74px; } .r1 span:nth-child(3) { width: 66px; }
  .r2 { height: 16px; }
  .r2 span:nth-child(1) { width: 51px; } .r2 span:nth-child(2) { width: 54px; } .r2 span:nth-child(3) { width: 49px; } .r2 span:nth-child(4) { width: 52px; }
  .r2 .on { background: #ececec; height: 18px; margin-top: -1px; position: relative; }
  .d3panel { margin: 0 9px 0 6px; height: 236px; flex: none; border: 1px solid #999; background: #e6e6e6; padding: 3px 3px 0 3px; }
  .gb3 { background: #cdcdcd; border: 1px solid #ababab; border-top: 0; padding: 2px 5px 0 4px; height: 78px; margin-bottom: 0; }
  .gb3.last { height: 26px; padding-top: 4px; }
  .r3 { height: 18px; display: flex; align-items: center; justify-content: flex-end; color: #444; font-size: 8.4px; }
  .r3 .lab { color: #333; font-size: 8.4px; }
  .r3:first-child { justify-content: flex-start; gap: 2px; }
  .cb { width: 10px; height: 10px; border: 1px solid #446; border-radius: 2px; background: #2f7fe0; position: relative; flex: none; }
  .cb::after { content: ""; position: absolute; left: 2px; top: 0; width: 3px; height: 6px; border: solid #fff; border-width: 0 1.5px 1.5px 0; transform: rotate(40deg); }
  .w56 { width: 56px; height: 15px; line-height: 13px; }
  .w96 { width: 96px; height: 16px; }
  .w191 { width: 191px; height: 16px; }
  .e3 { margin: 6px 4px 3px 3px; height: 9px; }
  .a3 { padding: 3px 12px 0 0; }
  .a3 button { width: 36px; height: 16px; }

  .arrow { position: absolute; }
  .a-1 { left: 627px; top: 367px; width: 54px; height: 16px; }
  .a-2 { left: 932px; top: 334px; width: 42px; height: 16px; }
  .mark { position: absolute; left: 1067px; top: 617px; width: 73px; height: 82px; }
  .wm1 { position: absolute; left: 1144px; top: 628px; font: 700 40px/42px "Liberation Sans", "Noto Sans CJK SC", sans-serif; letter-spacing: 3px; color: rgba(255,255,255,.5); white-space: nowrap; }
  .wm2 { position: absolute; left: 1150px; top: 672px; font: 15px/18px "Liberation Sans", sans-serif; letter-spacing: 1.2px; color: rgba(255,255,255,.5); white-space: nowrap; }
  .handle { position: absolute; width: 8px; height: 8px; border-radius: 50%; background: #fff; border: 1px solid #333; }
  .h1 { left: -3px; top: 301px; } .h2 { left: 674px; top: 707px; } .h3 { left: 1347px; top: 301px; }
  .chev.down { transform: rotate(180deg); }
</style>
